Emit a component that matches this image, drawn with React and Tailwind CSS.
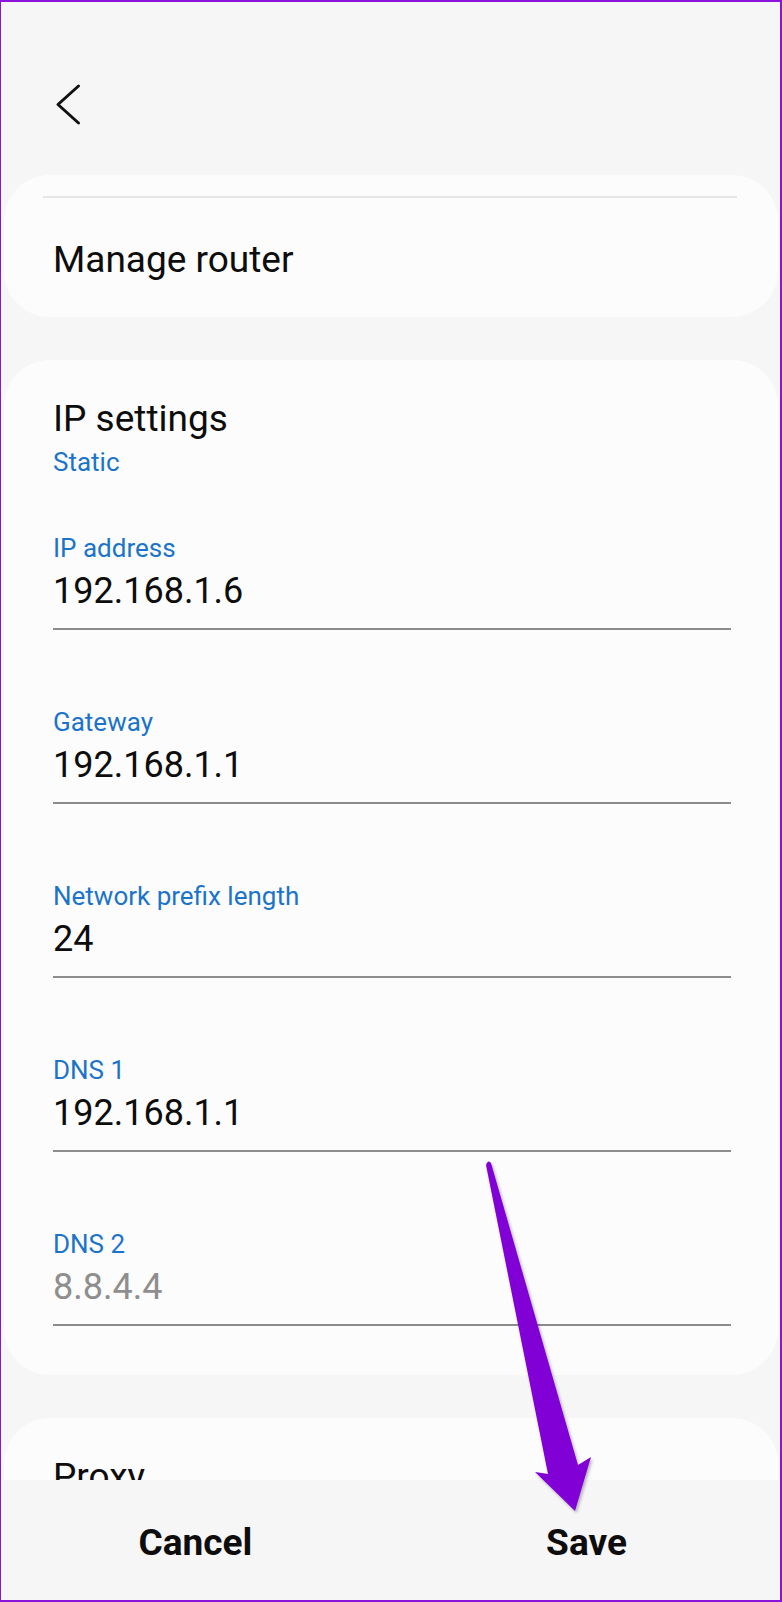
import React from 'react';

const FIELDS = [
  { label: 'IP address', value: '192.168.1.6' },
  { label: 'Gateway', value: '192.168.1.1' },
  { label: 'Network prefix length', value: '24' },
  { label: 'DNS 1', value: '192.168.1.1' },
  { label: 'DNS 2', value: '8.8.4.4', muted: true },
];

function Field({ label, value, muted, first }) {
  return (
    <div className={first ? 'mt-[60px]' : 'mt-[79px]'}>
      <div className="text-[26px] leading-[26px] text-[#1b74c9]">{label}</div>
      <div
        className={`mt-[12px] pb-[19px] border-b-2 border-[#8c8c8c] text-[36px] leading-[36px] ${
          muted ? 'text-[#8e8e8e]' : 'text-[#0d0d0d]'
        }`}
      >
        {value}
      </div>
    </div>
  );
}

function BackChevron() {
  return (
    <svg width="30" height="45" viewBox="0 0 30 45">
      <path d="M25.5 3 L5 21.5 L25.5 40" fill="none" stroke="#111" strokeWidth="3" strokeLinecap="round" strokeLinejoin="round" />
    </svg>
  );
}

function Arrow() {
  return (
    <svg className="absolute inset-0 pointer-events-none" width="782" height="1602" viewBox="0 0 782 1602">
      <defs>
        <filter id="arrowShadow" x="-20%" y="-5%" width="140%" height="110%">
          <feDropShadow dx="1.5" dy="2" stdDeviation="1.5" floodColor="#000" floodOpacity="0.3" />
        </filter>
      </defs>
      <path
        d="M486 1165 Q488 1159 491 1163 L578 1465 L591 1457 L575 1511 L535 1472 L548 1474 Z"
        fill="#8100d6"
        filter="url(#arrowShadow)"
      />
    </svg>
  );
}

export default function App() {
  return (
    <div className="relative w-[782px] h-[1602px] overflow-hidden bg-[#f6f6f6] flex flex-col font-[Roboto,sans-serif]">
      <div className="flex-1 overflow-hidden">
        <div className="h-[175px] pt-[83px] pl-[53px]">
          <BackChevron />
        </div>

        <div className="mx-[4px] h-[142px] rounded-[46px] bg-[#fcfcfc] pt-[21px]">
          <div className="ml-[39px] mr-[41px] h-[2px] bg-[#e6e6e6]" />
          <div className="pl-[49px] mt-[43px] text-[37px] leading-[37px] text-[#0d0d0d]">Manage router</div>
        </div>

        <div className="mx-[4px] mt-[43px] rounded-[46px] bg-[#fcfcfc] pl-[49px] pr-[47px] pt-[40px] pb-[49px]">
          <div className="text-[37px] leading-[37px] text-[#0d0d0d]">IP settings</div>
          <div className="mt-[12px] text-[26px] leading-[26px] text-[#1b74c9]">Static</div>
          {FIELDS.map((f, i) => (
            <Field key={f.label} {...f} first={i === 0} />
          ))}
        </div>

        <div className="mx-[4px] mt-[43px] h-[142px] rounded-[46px] bg-[#fcfcfc] pl-[49px] pt-[40px]">
          <div className="text-[37px] leading-[37px] text-[#0d0d0d]">Proxy</div>
        </div>
      </div>

      <div className="h-[122px] flex bg-[#f6f6f6] pt-[44px]">
        <div className="flex-1 text-center text-[37px] leading-[37px] font-bold text-[#0d0d0d]">Cancel</div>
        <div className="flex-1 text-center text-[37px] leading-[37px] font-bold text-[#0d0d0d]">Save</div>
      </div>

      <Arrow />
      <div className="absolute inset-0 pointer-events-none border-2 border-l border-[#8a14d9]" />
    </div>
  );
}
